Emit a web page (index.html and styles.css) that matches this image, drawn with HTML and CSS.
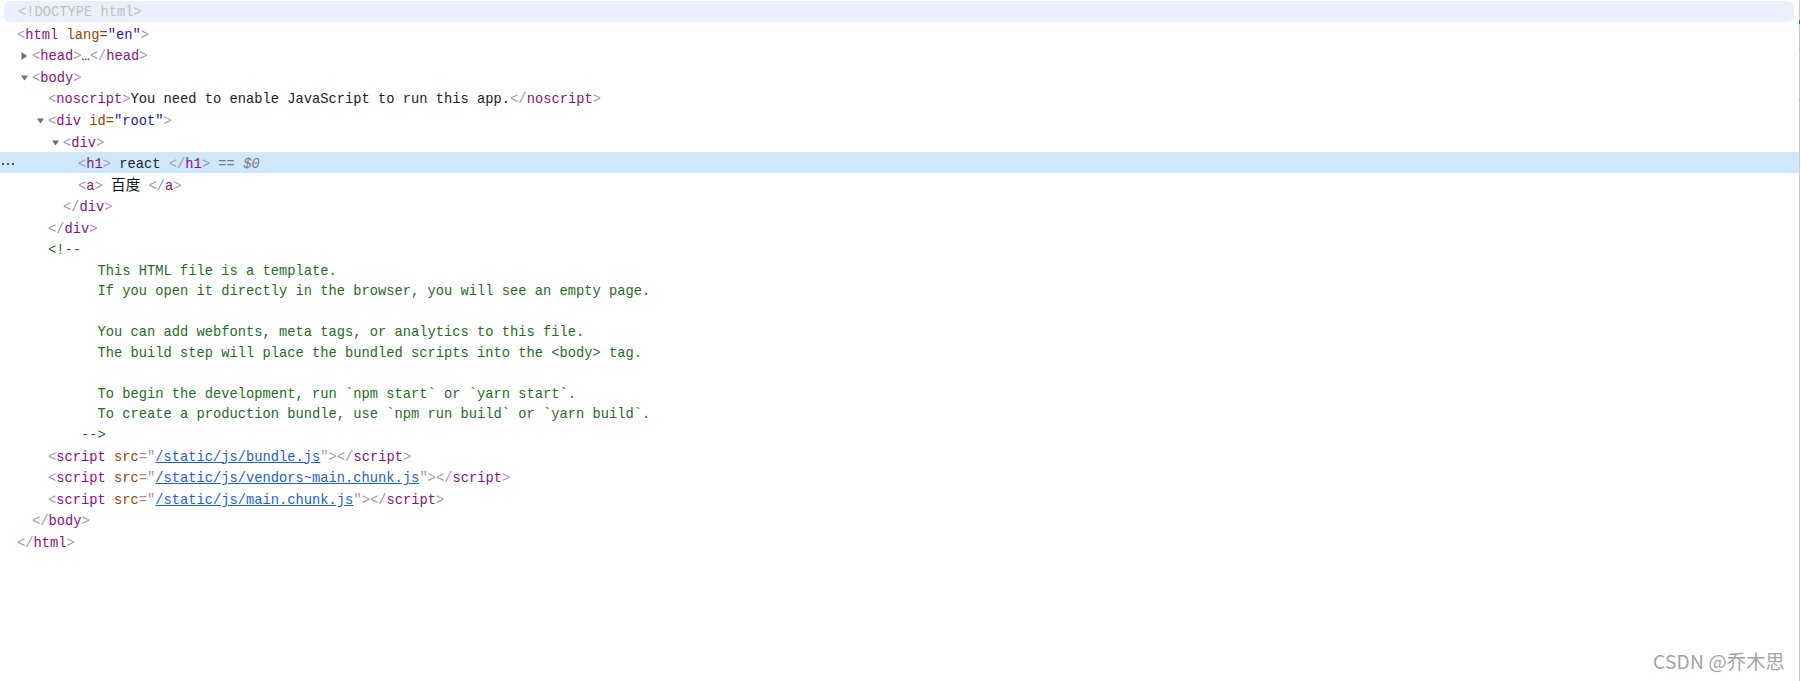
FILE: index.html
```html
<!DOCTYPE html>
<html lang="en">
<head>
<meta charset="utf-8">
<title>Elements</title>
<link rel="stylesheet" href="styles.css">
</head>
<body>
<div class="panel">
  <div class="tree">
    <div class="doctype"><div class="pill">&lt;!DOCTYPE html&gt;</div></div>
    <div class="row l0"><span class="b">&lt;</span><span class="t">html</span> <span class="an">lang</span><span class="an">=</span><span class="av">"en"</span><span class="b">&gt;</span></div>
    <div class="row l1"><svg class="tri" width="11" height="10" viewBox="0 0 11 10"><path d="M0.5 1 L6 5 L0.5 9 Z" fill="#6e6e6e"/></svg><span class="b">&lt;</span><span class="t">head</span><span class="b">&gt;</span>…<span class="b">&lt;/</span><span class="t">head</span><span class="b">&gt;</span></div>
    <div class="row l1"><svg class="tri" width="11" height="10" viewBox="0 0 11 10"><path d="M0 2.5 L7 2.5 L3.5 7.5 Z" fill="#6e6e6e"/></svg><span class="b">&lt;</span><span class="t">body</span><span class="b">&gt;</span></div>
    <div class="row l2"><span class="b">&lt;</span><span class="t">noscript</span><span class="b">&gt;</span>You need to enable JavaScript to run this app.<span class="b">&lt;/</span><span class="t">noscript</span><span class="b">&gt;</span></div>
    <div class="row l2"><svg class="tri" width="11" height="10" viewBox="0 0 11 10"><path d="M0 2.5 L7 2.5 L3.5 7.5 Z" fill="#6e6e6e"/></svg><span class="b">&lt;</span><span class="t">div</span> <span class="an">id</span><span class="an">=</span><span class="av">"root"</span><span class="b">&gt;</span></div>
    <div class="row l3"><svg class="tri" width="11" height="10" viewBox="0 0 11 10"><path d="M0 2.5 L7 2.5 L3.5 7.5 Z" fill="#6e6e6e"/></svg><span class="b">&lt;</span><span class="t">div</span><span class="b">&gt;</span></div>
    <div class="row selected"><svg class="dots" width="16" height="6" viewBox="0 0 16 6"><rect x="2" y="2" width="2" height="2" fill="#555"/><rect x="7" y="2" width="2" height="2" fill="#555"/><rect x="12" y="2" width="2" height="2" fill="#555"/></svg><span class="b">&lt;</span><span class="t">h1</span><span class="b">&gt;</span> react <span class="b">&lt;/</span><span class="t">h1</span><span class="b">&gt;</span><span class="sel"> == <i>$0</i></span></div>
    <div class="row l4"><span class="b">&lt;</span><span class="t">a</span><span class="b">&gt;</span> <span class="cjk">百度</span> <span class="b">&lt;/</span><span class="t">a</span><span class="b">&gt;</span></div>
    <div class="row l3"><span class="b">&lt;/</span><span class="t">div</span><span class="b">&gt;</span></div>
    <div class="row l2"><span class="b">&lt;/</span><span class="t">div</span><span class="b">&gt;</span></div>
    <div class="row l2 comment">&lt;!--
      This HTML file is a template.
      If you open it directly in the browser, you will see an empty page.

      You can add webfonts, meta tags, or analytics to this file.
      The build step will place the bundled scripts into the &lt;body&gt; tag.

      To begin the development, run `npm start` or `yarn start`.
      To create a production bundle, use `npm run build` or `yarn build`.
    --&gt;</div>
    <div class="row l2"><span class="b">&lt;</span><span class="t">script</span> <span class="an">src</span><span class="b">="</span><span class="lnk">/static/js/bundle.js</span><span class="b">"&gt;&lt;/</span><span class="t">script</span><span class="b">&gt;</span></div>
    <div class="row l2"><span class="b">&lt;</span><span class="t">script</span> <span class="an">src</span><span class="b">="</span><span class="lnk">/static/js/vendors~main.chunk.js</span><span class="b">"&gt;&lt;/</span><span class="t">script</span><span class="b">&gt;</span></div>
    <div class="row l2"><span class="b">&lt;</span><span class="t">script</span> <span class="an">src</span><span class="b">="</span><span class="lnk">/static/js/main.chunk.js</span><span class="b">"&gt;&lt;/</span><span class="t">script</span><span class="b">&gt;</span></div>
    <div class="row l1"><span class="b">&lt;/</span><span class="t">body</span><span class="b">&gt;</span></div>
    <div class="row l0"><span class="b">&lt;/</span><span class="t">html</span><span class="b">&gt;</span></div>
  </div>
  <span class="mark mark-blue"></span>
  <span class="mark mark-gray1"></span>
  <span class="mark mark-gray2"></span>
</div>
<div class="watermark">CSDN @乔木思</div>
</body>
</html>
```
FILE: styles.css
```css
html, body {
  margin: 0;
  padding: 0;
  background: #ffffff;
  overflow: hidden;
}
body {
  width: 1801px;
  height: 681px;
  position: relative;
}
.panel {
  width: 1799px;
  height: 681px;
  border-right: 1px solid #cbcbcb;
  position: relative;
}
.tree {
  display: flex;
  flex-direction: column;
  font-family: "Liberation Mono", "Noto Sans CJK SC", monospace;
  font-size: 13.75px;
  color: #222222;
}
.row {
  display: block;
  line-height: 20.5px;
  height: 18.2px;
  padding: 3.4px 0 0 0;
  white-space: pre;
}
.row.comment {
  height: auto;
  padding-bottom: 0;
  margin-bottom: -2.2px;
  color: #236e25;
}
.l0 { padding-left: 17px; }
.l1 { padding-left: 32px; }
.l2 { padding-left: 48px; }
.l3 { padding-left: 63px; }
.l4 { padding-left: 78px; }

.doctype {
  padding: 1px 5px 0.5px 4px;
}
.pill {
  background: #e9f0fb;
  border-radius: 6px;
  color: #c0c0c0;
  padding-left: 14px;
  padding-top: 2px;
  height: 18.8px;
  line-height: 19.3px;
  white-space: pre;
}
.tri {
  display: inline-block;
  margin-left: -11px;
  vertical-align: -1px;
}
.selected {
  background: #cfe8fc;
  padding-left: 0;
}
.dots {
  display: inline-block;
  margin-right: 62px;
  vertical-align: 1px;
}
.b { color: #a894a6; }
.t { color: #881280; }
.an { color: #994500; }
.av { color: #1a1aa6; }
.lnk {
  color: #1a5fd8;
  text-decoration: underline;
}
.sel { color: #7a7a7a; }
.sel i { font-style: italic; }
.cjk {
  font-family: "Noto Sans CJK SC", sans-serif;
  font-size: 14.6px;
  line-height: 0;
  color: #111111;
}
.mark {
  position: absolute;
  right: -1px;
  width: 1px;
}
.mark-blue {
  top: 20px;
  height: 4px;
  background: #1a73e8;
}
.mark-gray1 {
  top: 49px;
  height: 1px;
  background: #999999;
}
.mark-gray2 {
  top: 100px;
  height: 1px;
  background: #999999;
}
.watermark {
  position: absolute;
  right: 16px;
  top: 648px;
  font-family: "Noto Sans CJK SC", sans-serif;
  font-size: 19.2px;
  line-height: 26px;
  letter-spacing: 0.2px;
  color: #a3a3a3;
  text-shadow: 0 0 2px #ffffff;
}
```
